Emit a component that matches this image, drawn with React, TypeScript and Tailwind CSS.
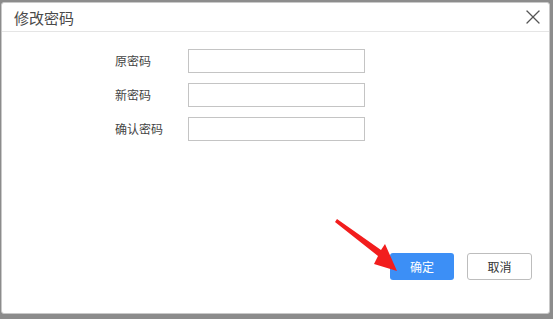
import { X } from 'lucide-react'

const fields = ['原密码', '新密码', '确认密码']

export default function App() {
  return (
    <div
      className="relative flex h-[319px] w-[553px] bg-[#8c8c8c] pt-[2px] pb-[5px] pl-[1px] pr-[3px]"
      style={{ fontFamily: '"Noto Sans CJK SC", "Liberation Sans", sans-serif' }}
    >
      <div className="flex flex-1 flex-col rounded-[3px] border border-[#c9c9c9] bg-white">
        {/* title bar */}
        <div className="flex h-[29px] items-center justify-between border-b border-[#e5e5e5] pl-[12px] pr-[4px]">
          <span className="text-[15px] leading-none text-[#4a4a4a]">修改密码</span>
          <X className="h-[24px] w-[24px] text-[#555]" strokeWidth={1.3} />
        </div>

        {/* form */}
        <div className="flex flex-col gap-[10px] pt-[17px] pl-[113px]">
          {fields.map((f) => (
            <div key={f} className="flex items-center">
              <span className="w-[73px] text-[12px] text-[#444]">{f}</span>
              <div className="h-[24px] w-[177px] border border-[#c4c4c4] bg-white" />
            </div>
          ))}
        </div>

        {/* buttons */}
        <div className="mt-auto flex justify-end gap-[13px] pr-[17px] pb-[33px]">
          <button className="flex h-[27px] w-[64px] items-center justify-center rounded-[3px] bg-[#3c8ff6] text-[12px] text-white">
            确定
          </button>
          <button className="flex h-[27px] w-[65px] items-center justify-center rounded-[3px] border border-[#bdbdbd] bg-white text-[12px] text-[#333]">
            取消
          </button>
        </div>
      </div>

      {/* red annotation arrow */}
      <svg className="absolute left-0 top-0" width="553" height="319" viewBox="0 0 553 319">
        <polygon
          points="335,222 337,219 381,250 385,244 397,271 374,264 378,256"
          fill="#f21d1d"
        />
      </svg>
    </div>
  )
}
